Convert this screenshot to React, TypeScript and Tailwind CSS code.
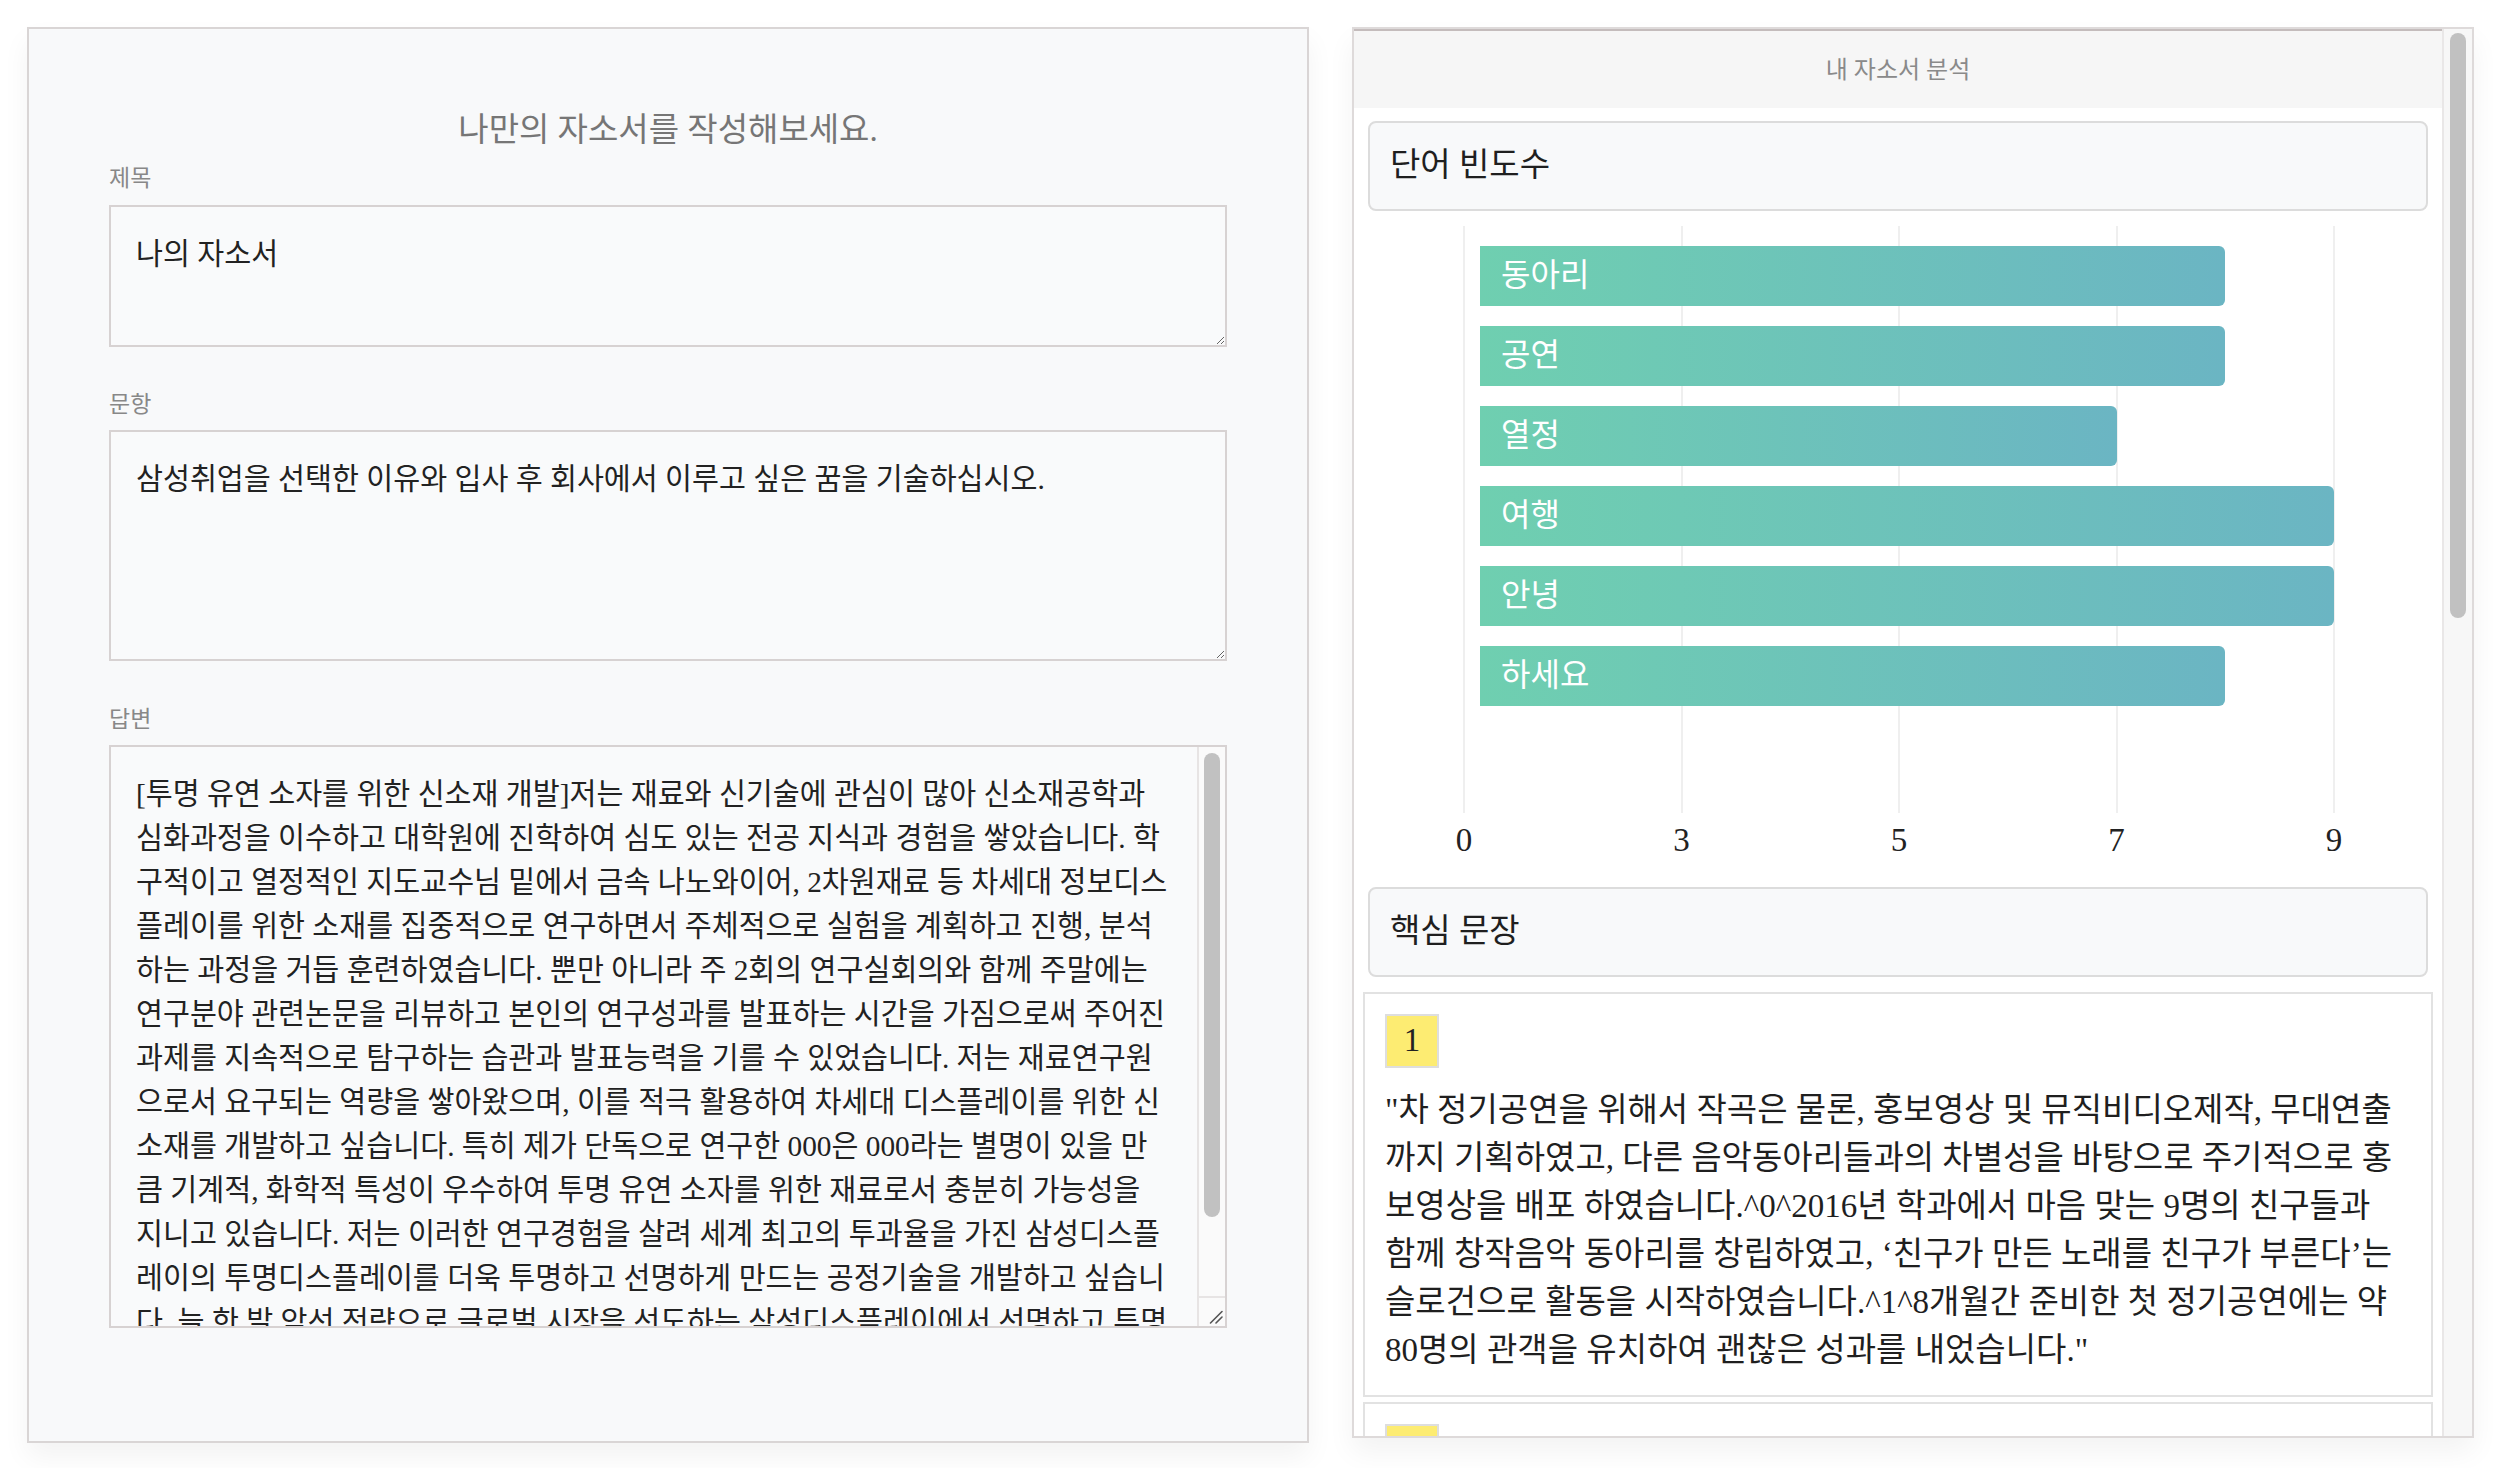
import { useMemo } from 'react';

const ANSWER_LINES = [
  '[투명 유연 소자를 위한 신소재 개발]저는 재료와 신기술에 관심이 많아 신소재공학과',
  '심화과정을 이수하고 대학원에 진학하여 심도 있는 전공 지식과 경험을 쌓았습니다. 학',
  '구적이고 열정적인 지도교수님 밑에서 금속 나노와이어, 2차원재료 등 차세대 정보디스',
  '플레이를 위한 소재를 집중적으로 연구하면서 주체적으로 실험을 계획하고 진행, 분석',
  '하는 과정을 거듭 훈련하였습니다. 뿐만 아니라 주 2회의 연구실회의와 함께 주말에는',
  '연구분야 관련논문을 리뷰하고 본인의 연구성과를 발표하는 시간을 가짐으로써 주어진',
  '과제를 지속적으로 탐구하는 습관과 발표능력을 기를 수 있었습니다. 저는 재료연구원',
  '으로서 요구되는 역량을 쌓아왔으며, 이를 적극 활용하여 차세대 디스플레이를 위한 신',
  '소재를 개발하고 싶습니다. 특히 제가 단독으로 연구한 000은 000라는 별명이 있을 만',
  '큼 기계적, 화학적 특성이 우수하여 투명 유연 소자를 위한 재료로서 충분히 가능성을',
  '지니고 있습니다. 저는 이러한 연구경험을 살려 세계 최고의 투과율을 가진 삼성디스플',
  '레이의 투명디스플레이를 더욱 투명하고 선명하게 만드는 공정기술을 개발하고 싶습니',
  '다. 늘 한 발 앞선 전략으로 글로벌 시장을 선도하는 삼성디스플레이에서 선명하고 투명',
  '한 미래를 그려나가고 싶습니다.',
];

// chart geometry (px, relative to the panel content box)
const ZERO_X = 110;
const UNIT = 108.75;
const BAR_LEFT = 126;
const toX = (v: number) => ZERO_X + (v - 1) * UNIT;

const words = [
  { label: '동아리', count: 8 },
  { label: '공연', count: 8 },
  { label: '열정', count: 7 },
  { label: '여행', count: 9 },
  { label: '안녕', count: 9 },
  { label: '하세요', count: 8 },
];

const ticks = [
  { text: '0', v: 1 },
  { text: '3', v: 3 },
  { text: '5', v: 5 },
  { text: '7', v: 7 },
  { text: '9', v: 9 },
];

const sentences: { lines?: string[]; text?: string }[] = [
  {
    lines: [
      '"차 정기공연을 위해서 작곡은 물론, 홍보영상 및 뮤직비디오제작, 무대연출',
      '까지 기획하였고, 다른 음악동아리들과의 차별성을 바탕으로 주기적으로 홍',
      '보영상을 배포 하였습니다.^0^2016년 학과에서 마음 맞는 9명의 친구들과',
      '함께 창작음악 동아리를 창립하였고, ‘친구가 만든 노래를 친구가 부른다’는',
      '슬로건으로 활동을 시작하였습니다.^1^8개월간 준비한 첫 정기공연에는 약',
      '80명의 관객을 유치하여 괜찮은 성과를 내었습니다."',
    ],
  },
  {
    text: '"공연을 준비하는 과정에서 팀원들과 의견이 맞지 않을 때도 있었지만, 서로의 생각을 존중하며 끝까지 대화로 해결하였습니다. 이 경험을 통해 협업의 중요성과 책임감을 배울 수 있었습니다."',
  },
  {
    text: '"방학 기간에는 해외 여행을 통해 다양한 문화를 경험하며 시야를 넓혔습니다. 낯선 곳에서 스스로 계획을 세우고 문제를 해결한 경험은 저에게 큰 자신감이 되었습니다."',
  },
];

function FormLabel({ children, className }: { children: string; className: string }) {
  return <div className={`h-[30px] text-[23px] leading-[30px] text-[#888888] ${className}`}>{children}</div>;
}

function Editor() {
  const answer = useMemo(() => ANSWER_LINES.join('\n'), []);
  return (
    <div className="h-[1416px] w-[1282px] shrink-0 border-2 border-[#d9d5d5] bg-[#f8f9fa] px-[80px] pt-[79px] shadow-[0_14px_26px_rgba(0,0,0,0.05)]">
      <h1 className="text-center text-[33px] leading-[45px] text-[#767676]">나만의 자소서를 작성해보세요.</h1>

      <FormLabel className="mt-[11px]">제목</FormLabel>
      <textarea
        className="mt-[11px] block h-[142px] w-full border-2 border-[#d7d2d2] bg-[#f9fafb] p-[25px] font-['Liberation_Serif','Noto_Sans_CJK_KR',serif] text-[29.3px] leading-[44px] text-[#222] outline-none"
        defaultValue="나의 자소서"
      />

      <FormLabel className="mt-[43px]">문항</FormLabel>
      <textarea
        className="mt-[10px] block h-[231px] w-full border-2 border-[#d7d2d2] bg-[#f9fafb] p-[25px] font-['Liberation_Serif','Noto_Sans_CJK_KR',serif] text-[29.3px] leading-[44px] text-[#222] outline-none"
        defaultValue="삼성취업을 선택한 이유와 입사 후 회사에서 이루고 싶은 꿈을 기술하십시오."
      />

      <FormLabel className="mt-[44px]">답변</FormLabel>
      <div className="mt-[10px] flex h-[583px] w-full border-2 border-[#d7d2d2] bg-[#f9fafb]">
        <textarea
          wrap="off"
          className="block h-full min-w-0 flex-1 resize-none overflow-hidden bg-transparent py-[25px] pr-[4px] pl-[25px] font-['Liberation_Serif','Noto_Sans_CJK_KR',serif] text-[29.3px] leading-[44px] text-[#222] outline-none"
          defaultValue={answer}
        />
        {/* scrollbar + resize corner */}
        <div className="flex w-[28px] shrink-0 flex-col border-l-2 border-[#e7e4e4] bg-[#fafafa]">
          <div className="flex-1 pt-[6px]">
            <div className="mx-auto h-[464px] w-[16px] rounded-full bg-[#c1c1c1]" />
          </div>
          <div className="flex h-[30px] items-end justify-end border-t-2 border-[#e7e4e4] pr-[2px] pb-[2px]">
            <svg width="14" height="14" viewBox="0 0 14 14" fill="none" stroke="#555" strokeWidth="1.6" strokeLinecap="round">
              <path d="M1.5 13L13 1.5" />
              <path d="M7 13L13 7" />
            </svg>
          </div>
        </div>
      </div>
    </div>
  );
}

function WordChart() {
  return (
    <div className="relative h-[676px]">
      {ticks.map((t) => (
        <div
          key={t.text}
          className="absolute top-[15px] h-[587px] w-[2px] bg-[#efefef]"
          style={{ left: toX(t.v) - 1 }}
        />
      ))}
      <div className="flex flex-col gap-[20px] pt-[35px]">
        {words.map((w) => (
          <div
            key={w.label}
            className="relative ml-[126px] h-[60px] rounded-r-[6px] bg-linear-to-r from-[#6fcfb0] to-[#6bb5c3] pl-[21px] text-[32px] leading-[58px] text-white"
            style={{ width: toX(w.count) - BAR_LEFT }}
          >
            {w.label}
          </div>
        ))}
      </div>
      {ticks.map((t) => (
        <div
          key={`l${t.text}`}
          className="absolute top-[609px] -translate-x-1/2 text-[33px] leading-[40px] text-[#222]"
          style={{ left: toX(t.v) }}
        >
          {t.text}
        </div>
      ))}
    </div>
  );
}

function SectionCard({ title, className }: { title: string; className: string }) {
  return (
    <div
      className={`mx-[14px] flex h-[90px] items-center rounded-[8px] border-2 border-[#dcdcdc] bg-[#f8f9fa] pl-[20px] text-[33px] text-[#1f1f1f] ${className}`}
    >
      {title}
    </div>
  );
}

function Analysis() {
  return (
    <div className="flex h-[1411px] w-[1122px] shrink-0 border-2 border-[#dedada] bg-white shadow-[0_14px_26px_rgba(0,0,0,0.05)]">
      <div className="min-w-0 flex-1 overflow-hidden">
        <div className="flex h-[79px] items-center justify-center border-t-2 border-[#c4bcbc] bg-[#f6f6f6] text-[24px] text-[#8a8a8a]">
          내 자소서 분석
        </div>

        <SectionCard title="단어 빈도수" className="mt-[13px]" />
        <WordChart />
        <SectionCard title="핵심 문장" className="" />

        <div className="mt-[15px] flex flex-col gap-[5px] px-[9px] pb-[10px]">
          {sentences.map((s, i) => (
            <div key={i} className="border-2 border-[#e2e2e2] bg-white px-[20px] pt-[20px] pb-[21px]">
              <div className="flex h-[54px] w-[54px] items-center justify-center border-2 border-[#dedede] bg-[#fdec72] text-[33px] text-[#222]">
                {i + 1}
              </div>
              <div className="mt-[18px] text-[33px] leading-[48px] text-[#1f1f1f]">
                {s.lines
                  ? s.lines.map((line) => (
                      <span key={line} className="block whitespace-nowrap">
                        {line}
                      </span>
                    ))
                  : s.text}
              </div>
            </div>
          ))}
        </div>
      </div>

      {/* scrollbar */}
      <div className="w-[30px] shrink-0 border-l-2 border-[#e9e7e7] bg-[#f7f7f7] pt-[4px]">
        <div className="mx-auto h-[585px] w-[16px] rounded-full bg-[#c1c1c1]" />
      </div>
    </div>
  );
}

export default function App() {
  return (
    <div className="flex h-[1468px] w-full items-start gap-[43px] overflow-hidden bg-white pt-[27px] pl-[27px] font-['Liberation_Serif','Noto_Sans_CJK_KR',serif]">
      <Editor />
      <Analysis />
    </div>
  );
}
